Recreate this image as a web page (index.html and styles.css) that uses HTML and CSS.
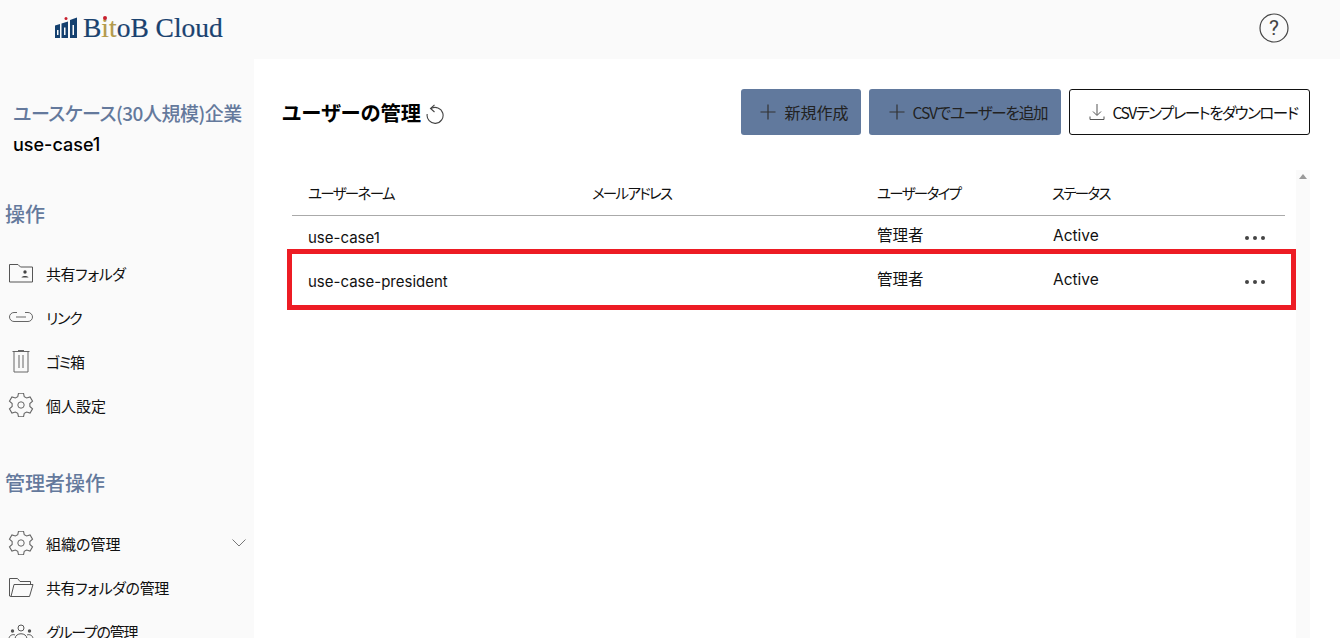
FILE: index.html
```html
<!DOCTYPE html>
<html lang="ja">
<head>
<meta charset="utf-8">
<title>ユーザーの管理</title>
<link rel="stylesheet" href="styles.css">
</head>
<body>
<header class="topbar">
  <div class="logo">
    <svg class="logo-mark" width="22" height="21" viewBox="0 0 22 21">
      <circle cx="11" cy="1.500" r="1.500" fill="#c8202f"/>
      <path d="M0 8.500l5-1.500V21H0z M6.500 6.500l6.500-2V21H6.500z M15 3l7-2.500V21h-7z" fill="#14406f"/>
      <path d="M2 13h1.500v5H2z M9 10.500h1.500v7.500H9z M17.500 8H19v10h-1.500z" fill="#fafafa"/>
    </svg>
    <span class="logo-text">B<span class="gold">it</span>oB Cloud</span>
  </div>
  <svg class="help" width="30" height="30" viewBox="0 0 30 30">
    <circle cx="15" cy="15" r="14" fill="none" stroke="#444" stroke-width="1.200"/>
    <text x="15" y="22" text-anchor="middle" class="help-q">?</text>
  </svg>
</header>
<div class="shell">
  <aside class="sidebar">
    <div class="org">
      <div class="org-name">ユースケース(30人規模)企業</div>
      <div class="org-user">use-case1</div>
    </div>
    <h2 class="section">操作</h2>
    <nav class="nav">
      <a class="nav-item kana">
        <svg class="ico" width="26" height="24" viewBox="0 0 26 24"><path d="M1.500 3.500h8.500l2.500 2.500h12v15h-23z" fill="none" stroke="#555" stroke-width="1"/><circle cx="17" cy="11" r="1.700" fill="#444"/><path d="M13.500 16.500c.5-2 6.500-2 7 0z" fill="#444"/></svg>
        <span>共有フォルダ</span>
      </a>
      <a class="nav-item kana-tight">
        <svg class="ico" width="26" height="24" viewBox="0 0 26 24"><path d="M9 7.500H6a4.500 4.500 0 0 0 0 9h14a4.500 4.500 0 0 0 0-9h-3" fill="none" stroke="#666" stroke-width="1"/><path d="M8 12h10" stroke="#999" stroke-width="1.500"/></svg>
        <span>リンク</span>
      </a>
      <a class="nav-item kana-tight">
        <svg class="ico" width="26" height="24" viewBox="0 0 26 24"><path d="M4.500 2.500h17 M10 1.500h6 M6 2.500v20.500h14V2.500 M11 6v13 M15 6v13" fill="none" stroke="#666" stroke-width="1"/></svg>
        <span>ゴミ箱</span>
      </a>
      <a class="nav-item">
        <svg class="ico" width="26" height="24" viewBox="0 0 26 24"><use href="#gear"/></svg>
        <span>個人設定</span>
      </a>
    </nav>
    <h2 class="section section-admin">管理者操作</h2>
    <nav class="nav">
      <a class="nav-item">
        <svg class="ico" width="26" height="24" viewBox="0 0 26 24"><use href="#gear"/></svg>
        <span>組織の管理</span>
        <svg class="chev" width="14" height="8" viewBox="0 0 14 8"><path d="M.5 .5L7 7l6.500-6.500" fill="none" stroke="#777" stroke-width="1"/></svg>
      </a>
      <a class="nav-item kana">
        <svg class="ico" width="26" height="24" viewBox="0 0 26 24"><path d="M3 21.500L1.500 21V3.500h8l2.500 3h10.500v3 M3 21.500l3-12h19l-3.500 12z" fill="none" stroke="#555" stroke-width="1"/></svg>
        <span>共有フォルダの管理</span>
      </a>
      <a class="nav-item kana-tight">
        <svg class="ico" width="26" height="24" viewBox="0 0 26 24"><circle cx="13" cy="9" r="3" fill="none" stroke="#555"/><circle cx="4.500" cy="12" r="1.700" fill="#555"/><circle cx="21.500" cy="12" r="1.700" fill="#555"/><path d="M7 20c0-7 12-7 12 0 M1 20c0-4 4-5 6-4 M25 20c0-4-4-5-6-4" fill="none" stroke="#555"/></svg>
        <span>グループの管理</span>
      </a>
    </nav>
  </aside>
  <main class="main">
    <div class="title-row">
      <div class="title-wrap">
        <h1 class="title">ユーザーの管理</h1>
        <svg class="reload" width="20" height="20" viewBox="0 0 20 20"><path d="M6 4.500a8 8 0 1 1-3.800 5.500" fill="none" stroke="#444" stroke-width="1.100"/><path d="M9.500 .8L5.500 4.500 9.500 8" fill="none" stroke="#444" stroke-width="1.100"/></svg>
      </div>
      <div class="actions">
        <button class="btn btn-primary btn-new">
          <svg width="16" height="16" viewBox="0 0 16 16"><path d="M8 .5v15 M.5 8h15" stroke="#333" stroke-width="1.200"/></svg>
          <span>新規作成</span>
        </button>
        <button class="btn btn-primary btn-csv">
          <svg width="16" height="16" viewBox="0 0 16 16"><path d="M8 .5v15 M.5 8h15" stroke="#333" stroke-width="1.200"/></svg>
          <span>CSVでユーザーを追加</span>
        </button>
        <button class="btn btn-outline">
          <svg width="18" height="18" viewBox="0 0 18 18"><path d="M9 1v11 M5 8.500l4 4 4-4 M2 13.500v3h14v-3" fill="none" stroke="#555" stroke-width="1"/></svg>
          <span>CSVテンプレートをダウンロード</span>
        </button>
      </div>
    </div>
    <div class="table-area">
      <div class="table">
        <div class="row head">
          <div>ユーザーネーム</div><div>メールアドレス</div><div>ユーザータイプ</div><div>ステータス</div><div></div>
        </div>
        <div class="row row-first">
          <div class="latin">use-case1</div><div></div><div class="kanji">管理者</div><div class="latin active">Active</div><div class="dots"><i></i><i></i><i></i></div>
        </div>
        <div class="row row-second">
          <div class="latin">use-case-president</div><div></div><div class="kanji">管理者</div><div class="latin active">Active</div><div class="dots"><i></i><i></i><i></i></div>
        </div>
        <div class="highlight"></div>
      </div>
      <div class="scrolltrack"><span class="arrow"></span></div>
    </div>
  </main>
</div>
<svg class="defs" width="0" height="0">
  <defs>
    <g id="gear" fill="none" stroke="#666" stroke-width="1">
      <path transform="translate(13 12) scale(1.080) translate(-13 -12)" d="M10.700 1h4.600l.7 3.300 2.200 1.200 3.200-1 2.300 4-2.500 2.200v2.600l2.500 2.200-2.300 4-3.200-1-2.200 1.200-.7 3.300h-4.600l-.7-3.300-2.200-1.200-3.200 1-2.300-4 2.500-2.200v-2.600L2.300 8.500l2.300-4 3.200 1L10 4.300z"/>
      <circle cx="13" cy="12" r="3.200"/>
    </g>
  </defs>
</svg>
</body>
</html>
```
FILE: styles.css
```css
* { box-sizing: border-box; }
html, body { margin: 0; height: 100%; overflow: hidden; }
body {
  background: #fafafa;
  color: #111;
  font-family: "Noto Sans CJK JP", "Noto Sans", sans-serif;
  font-size: 15px;
  font-feature-settings: "palt";
}
.defs { position: absolute; }
.topbar {
  height: 59px;
  display: flex;
  align-items: center;
  justify-content: space-between;
  padding: 0 51px 4px 55px;
}
.logo { display: flex; align-items: center; gap: 6px; }
.logo-text {
  font-family: "Liberation Serif", serif;
  font-size: 27.500px;
  line-height: 30px;
  color: #1a426f;
  -webkit-text-stroke: .2px #1a426f;
}
.gold { color: #b39a4a; -webkit-text-stroke: .2px #b39a4a; position: relative; }
.gold::before {
  content: "";
  position: absolute;
  left: 2px;
  top: 4px;
  width: 4px;
  height: 4px;
  border-radius: 50%;
  background: #c8202f;
}
.help-q { font-family: "Roboto", sans-serif; font-size: 21px; fill: #444; }
.shell { display: flex; height: 579px; }
.sidebar { width: 254px; flex: none; overflow: hidden; padding: 41px 8px 0 0; }
.org { padding-left: 13px; }
.org-name { font-size: 19px; font-weight: 500; line-height: 26px; letter-spacing: -.5px; color: #64799c; white-space: nowrap; }
.org-user { font-family: "Inter", sans-serif; font-size: 18px; font-weight: 500; line-height: 24px; margin-top: 7px; color: #000; }
.section { margin: 0; padding-left: 5px; font-size: 20px; font-weight: 500; color: #64799c; line-height: 26px; }
.org + .section { margin-top: 44px; }
.section-admin { margin-top: 43px; }
.nav { display: flex; flex-direction: column; }
.section + .nav { margin-top: 24px; }
.section-admin + .nav { margin-top: 25px; }
.nav-item { display: flex; align-items: center; height: 44px; padding-left: 8px; gap: 12px; color: #111; }
.kana { letter-spacing: -.4px; }
.kana-tight { letter-spacing: -1.200px; }
.ico { flex: none; }
.chev { margin-left: auto; }
.main { flex: 1; background: #fff; padding: 30px 30px 0 28px; min-width: 0; }
.title-row { display: flex; align-items: center; justify-content: space-between; height: 46px; }
.title-wrap { display: flex; align-items: center; gap: 4px; }
.title { margin: 0; font-size: 20.300px; font-weight: 700; color: #000; line-height: 46px; }
.reload { margin-top: 4px; }
.actions { display: flex; gap: 8px; }
.btn {
  height: 46px;
  display: flex;
  align-items: center;
  gap: 8px;
  border-radius: 3px;
  font: inherit;
  font-feature-settings: "palt";
  color: #222;
  padding: 0;
  justify-content: center;
  white-space: nowrap;
}
.btn-primary { background: #61799d; border: 0; }
.btn-new { width: 120px; font-size: 16px; padding-left: 7px; }
.btn-csv { width: 192px; font-size: 15.500px; letter-spacing: -1.150px; padding-left: 6px; }
.btn-outline { width: 241px; background: #fff; border: 1px solid #111; color: #111; gap: 7px; font-size: 15.500px; letter-spacing: -1.500px; padding-left: 6px; }
.table-area { display: flex; margin-top: 35px; padding-left: 10px; height: 468px; }
.table { position: relative; width: 993px; }
.row {
  display: grid;
  grid-template-columns: 284px 285px 175px 193px 1fr;
  align-items: center;
  padding-left: 16px;
}
.head { height: 46px; border-bottom: 1px solid #aaa; font-size: 14.500px; letter-spacing: -1.700px; }
.row-first { height: 40px; }
.row-second { height: 48px; }
.latin { font-family: "Inter", sans-serif; font-size: 15px; margin-top: 2px; }
.active { font-size: 15.500px; margin-top: -1px; padding-left: 1px; }
.kanji { margin-top: -5px; font-size: 15.500px; }
.dots { display: flex; gap: 4px; margin-top: 3px; }
.dots i { width: 4px; height: 4px; border-radius: 50%; background: #444; }
.highlight { position: absolute; left: -5px; right: -11px; top: 79px; height: 61px; border: 5px solid #ed1c24; }
.scrolltrack { width: 14px; margin-left: 11px; background: #fafafa; display: flex; justify-content: center; }
.arrow { width: 0; height: 0; margin-top: 4px; border: 4px solid transparent; border-top: 0; border-bottom: 5px solid #999; }
```
